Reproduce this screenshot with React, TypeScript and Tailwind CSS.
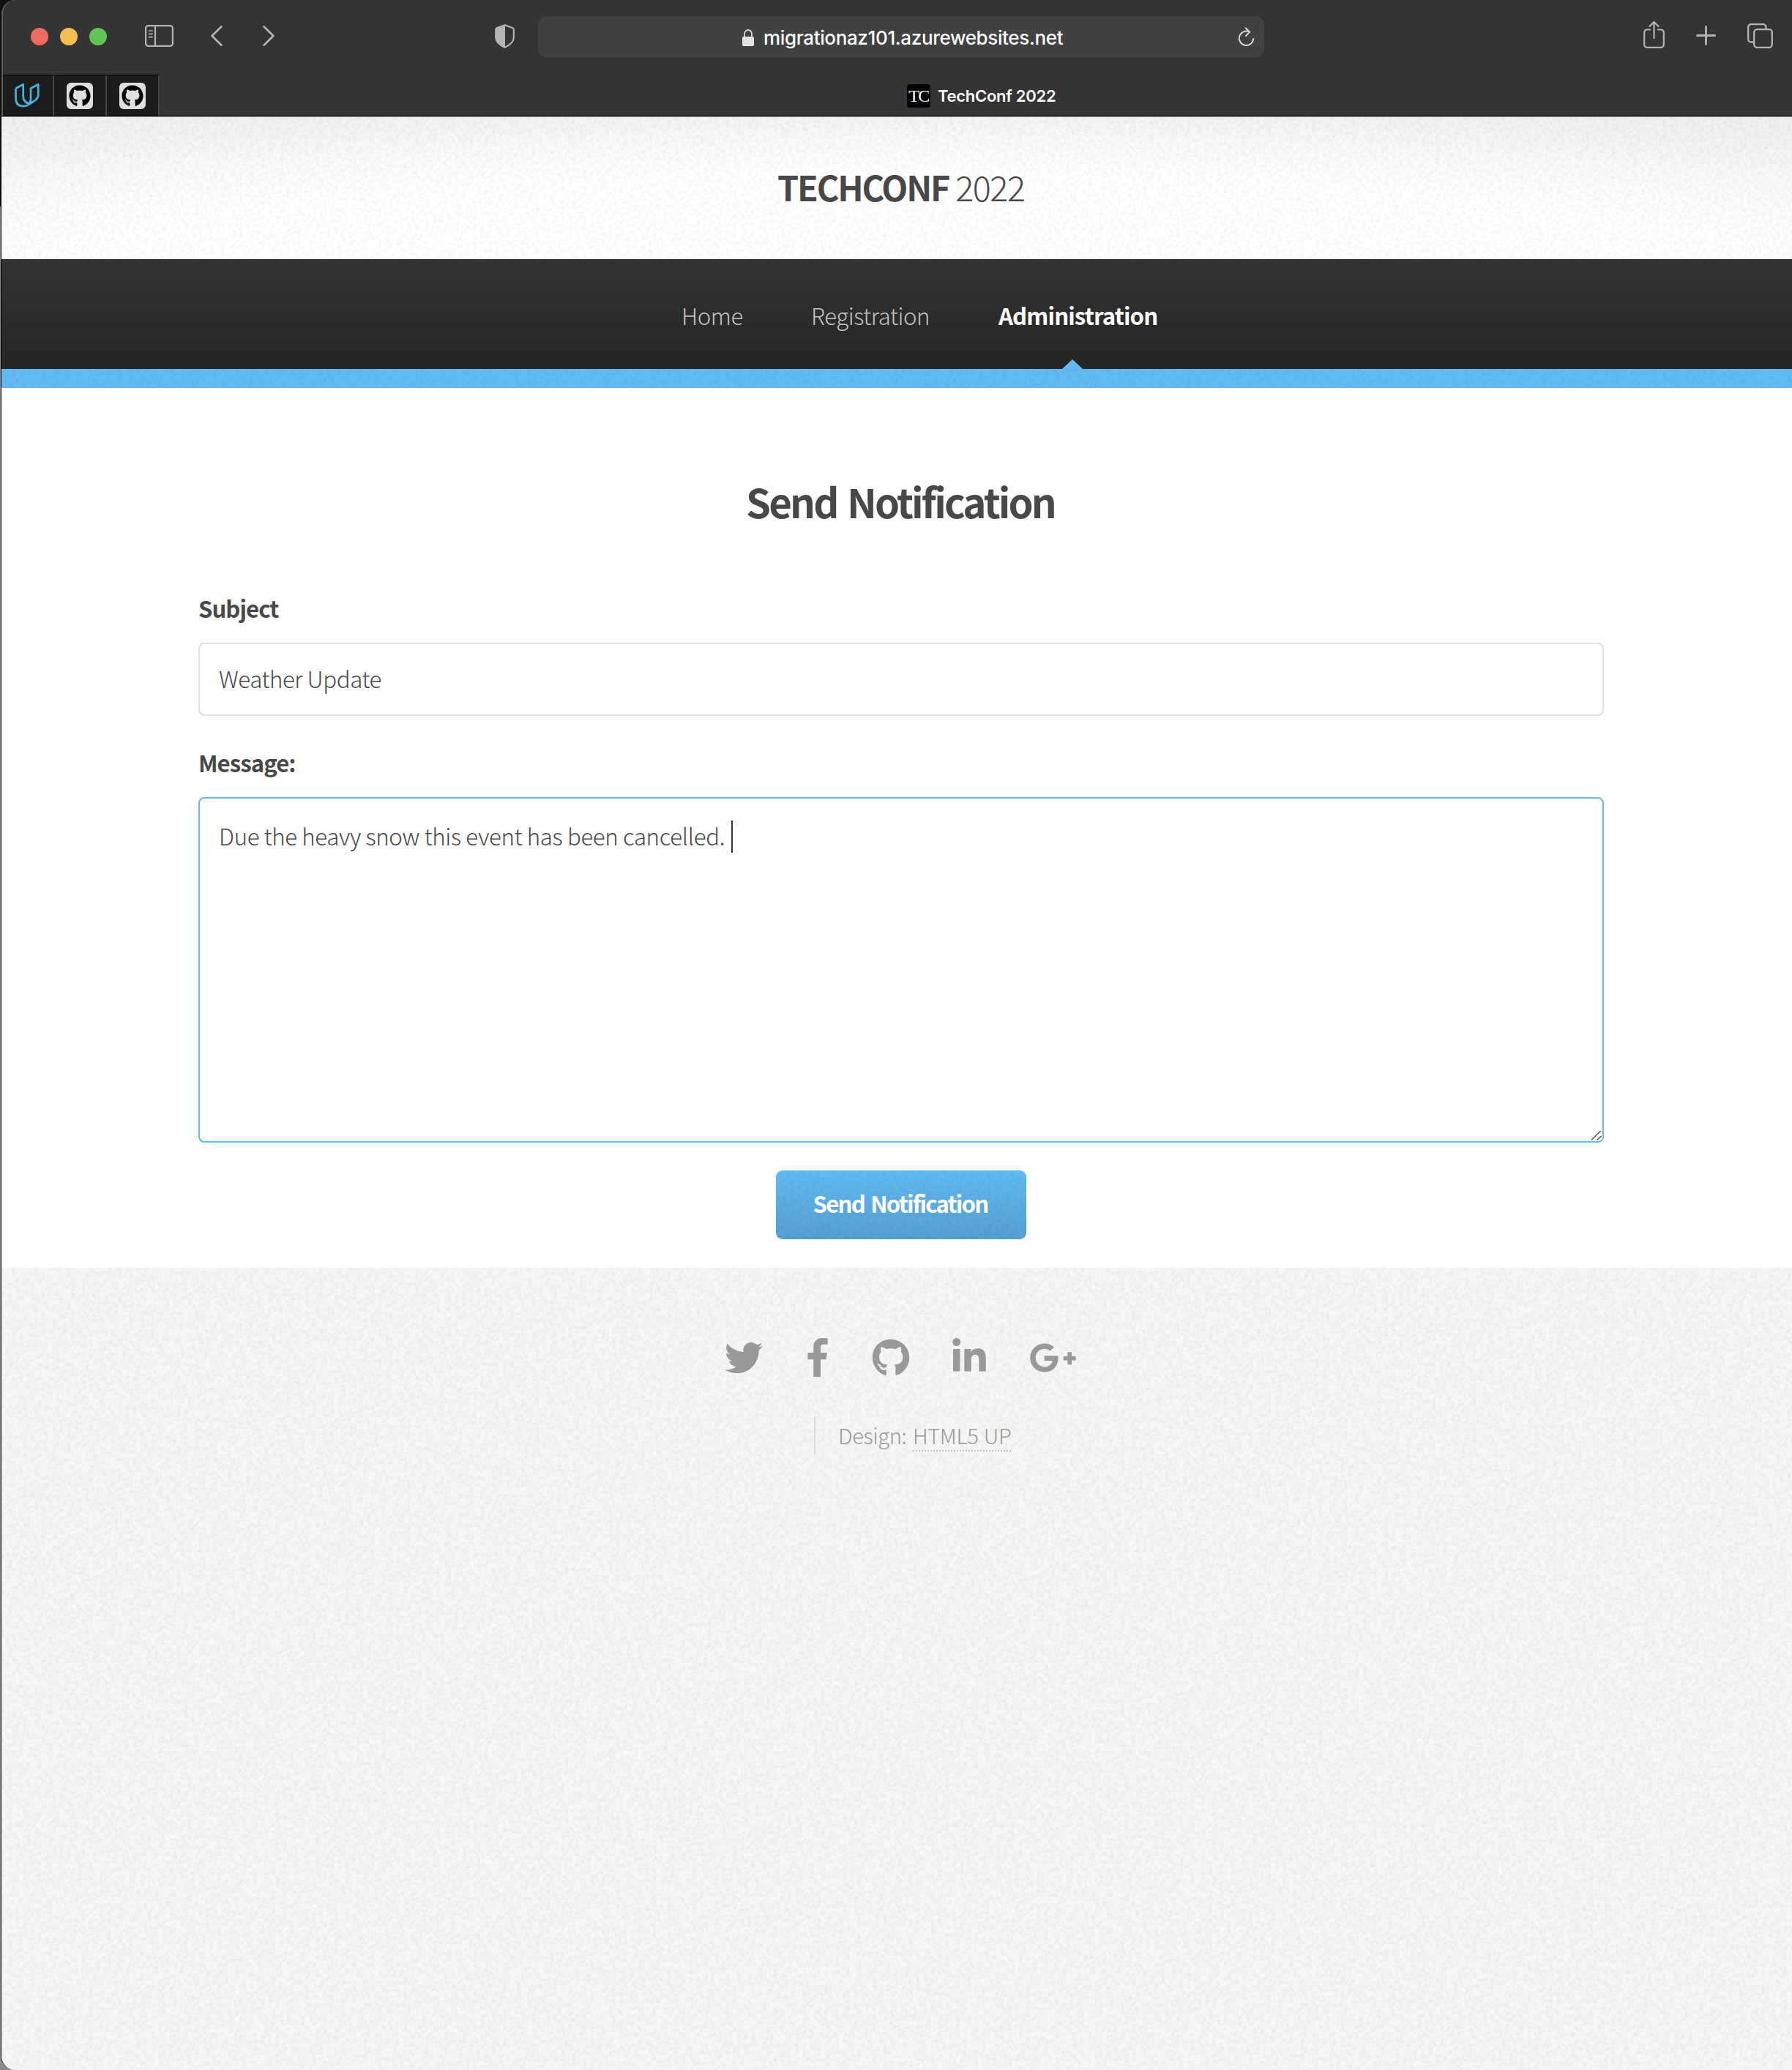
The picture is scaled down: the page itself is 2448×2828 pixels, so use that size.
import React from "react";
import { FaTwitter, FaGithub, FaGooglePlusG, FaLinkedinIn } from "react-icons/fa";

const SANS = "font-['Noto_Sans_CJK_SC','Noto_Sans',sans-serif]";

function Grain({ id, faint }: { id: string; faint?: boolean }) {
  return (
    <svg className="pointer-events-none absolute inset-0 h-full w-full" aria-hidden="true">
      <filter id={id} x="0" y="0" width="100%" height="100%">
        <feTurbulence type="fractalNoise" baseFrequency="0.2" numOctaves="3" seed="4" />
        <feColorMatrix
          type="matrix"
          values={
            faint
              ? "0 0 0 0 0  0 0 0 0 0  0 0 0 0 0  0.09 0 0 0 -0.03"
              : "0 0 0 0 0  0 0 0 0 0  0 0 0 0 0  0.09 0 0 0 -0.034"
          }
        />
      </filter>
      <rect width="100%" height="100%" filter={`url(#${id})`} />
    </svg>
  );
}

function PinnedGithub() {
  return (
    <div className="flex h-full w-[72px] items-center border-r-2 border-[#454545] bg-[#1c1c1c] pl-[17px]">
      <div className="flex size-9 items-center justify-center rounded-[6px] bg-[#dedede]">
        <FaGithub className="size-[30px] text-black" />
      </div>
    </div>
  );
}

function Chrome() {
  return (
    <header className="relative h-[160px] shrink-0 overflow-hidden border-b border-[#9c9898] bg-[#343434] font-['Inter',sans-serif]">
      <div className="pointer-events-none absolute top-0 left-0 z-10 h-[158px] w-10 rounded-tl-[20px] border-l-2 border-[#5c5c5c]" />
      <div className="flex h-[102px] items-start text-[#b4b4b4]">
        <div className="mt-[38px] ml-[40px] flex gap-4">
          <div className="size-6 rounded-full bg-[#ec6a5e]" />
          <div className="size-6 rounded-full bg-[#f5bf4f]" />
          <div className="size-6 rounded-full bg-[#61c554]" />
        </div>
        <svg className="mt-[34px] ml-[52px] h-[30px] w-[39px]" viewBox="0 0 39 30" fill="none" stroke="currentColor" strokeWidth="2.2">
          <rect x="1.1" y="1.1" width="36.8" height="27.8" rx="3.5" />
          <path d="M14 1v28" />
          <path d="M5.5 8h4.5M5.5 12.3h4.5M5.5 16.6h4.5" strokeWidth="1.7" strokeLinecap="round" />
        </svg>
        <svg className="mt-[34px] ml-[51px] h-[30px] w-[16px]" viewBox="0 0 16 30" fill="none" stroke="currentColor" strokeWidth="2.6" strokeLinecap="round" strokeLinejoin="round">
          <path d="M14.5 2.3 1.6 15l12.9 12.7" />
        </svg>
        <svg className="mt-[34px] ml-[55px] h-[30px] w-[16px]" viewBox="0 0 16 30" fill="none" stroke="currentColor" strokeWidth="2.6" strokeLinecap="round" strokeLinejoin="round">
          <path d="M1.5 2.3 14.4 15 1.5 27.7" />
        </svg>
        <svg className="mt-[33px] ml-[301px] h-[33px] w-[27px]" viewBox="0 0 27 33" fill="none">
          <path d="M13.5 1.2 3 5Q1.2 5.700 1.200 7.500V18.500Q1.200 26 13.500 31.800Q25.800 26 25.800 18.500V7.500Q25.800 5.700 24 5Z" stroke="currentColor" strokeWidth="2.1" />
          <path d="M14 1 3 5Q1.200 5.700 1.200 7.500V18.500Q1.200 26 14 32Z" fill="currentColor" />
        </svg>
        <div className="mt-[22px] ml-[32px] flex h-14 w-[992px] rounded-xl bg-[#414141]">
          <svg className="mt-[18px] ml-[279px] h-[23px] w-[16px]" viewBox="0 0 16 23" fill="none">
            <rect y="10" width="16" height="13" rx="1.800" fill="#e2e2e2" />
            <path d="M3 11V6.500a5 5.500 0 0 1 10 0V11" stroke="#d8d8d8" strokeWidth="1.800" />
          </svg>
          <span className="mt-[11px] ml-[13px] w-[420px] whitespace-nowrap text-[26px] leading-[38px] font-medium tracking-[-0.36px] text-white">
            migrationaz101.azurewebsites.net
          </span>
          <svg className="mt-[15px] ml-[228px] h-[27px] w-[23px]" viewBox="0 0 23 27" fill="none" stroke="#d8d8d8" strokeWidth="1.9" strokeLinecap="round" strokeLinejoin="round">
            <path d="M21.200 16A9.700 9.700 0 1 1 16 6.700M10.800 1.500 16.200 6.700 11 12" />
          </svg>
        </div>
        <svg className="mt-[28px] ml-[518px] h-[38px] w-[29px]" viewBox="0 0 29 38" fill="none" stroke="currentColor" strokeWidth="2.200" strokeLinecap="round" strokeLinejoin="round">
          <path d="M9 12.500H5a3.800 3.800 0 0 0-3.800 3.800V33A3.800 3.800 0 0 0 5 36.800H24a3.800 3.800 0 0 0 3.800-3.800V16.300a3.800 3.800 0 0 0-3.800-3.800H20M14.500 24V2.500M8.500 8 14.500 2 20.500 8" />
        </svg>
        <svg className="mt-[35px] ml-[43px] size-[27px]" viewBox="0 0 27 27" stroke="currentColor" strokeWidth="2.800" strokeLinecap="round">
          <path d="M13.500 1.400v24.200M1.400 13.500h24.200" />
        </svg>
        <svg className="mt-[32px] ml-[43px] h-[34px] w-[35px]" viewBox="0 0 35 34" fill="none" stroke="currentColor" strokeWidth="2.300">
          <rect x="9.200" y="8.200" width="24.600" height="24.600" rx="4" />
          <path d="M25.500 8V5A3.800 3.800 0 0 0 21.700 1.200H5A3.800 3.800 0 0 0 1.200 5V21.700A3.800 3.800 0 0 0 5 25.500H9" />
        </svg>
      </div>
      <div className="flex h-[57px] border-b border-black">
        <div className="flex h-full w-[216px] border-t border-black">
          <div className="flex h-full w-[72px] items-center border-r-2 border-[#454545] bg-[#1c1c1c] pl-[18px]">
            <svg className="h-[33px] w-[34px]" viewBox="0 0 34 33" fill="none" stroke="#4aaede" strokeWidth="2.700" strokeLinejoin="round">
              <path d="M1.500 6.800 11.700 1.300V17.500Q11.700 24 17.500 26.500M1.500 6.800V20Q1.500 31.200 12 31.200Q16 31.200 20 28.500L27.500 23.500Q32.300 20 32.300 15V1.300L22 6.800V22Q22 26 18.500 29" />
              <path d="M14 24.500Q18 29 25.500 24.800" />
            </svg>
          </div>
          <PinnedGithub />
          <PinnedGithub />
        </div>
        <div className="mt-[13px] ml-[1021px] flex size-8 items-center justify-center rounded-[4px] bg-black">
          <span className="font-['Liberation_Serif',serif] text-[24px] leading-8 tracking-[-1.500px] text-white">TC</span>
        </div>
        <span className="mt-[11px] ml-[10px] text-[22px] leading-9 font-semibold tracking-[-0.270px] whitespace-nowrap text-white">TechConf 2022</span>
      </div>
    </header>
  );
}

function Label({ children }: { children: React.ReactNode }) {
  return <label className="block h-[67px] text-[31.200px] leading-[39px] font-bold tracking-[-0.980px]">{children}</label>;
}

export default function App() {
  return (
    <div className="h-[2828px] w-[2448px] overflow-hidden bg-[linear-gradient(to_bottom,#101010_282px,#8c8c8c_282px)]">
      <div className="relative ml-px flex h-full flex-col overflow-hidden rounded-tl-[20px] rounded-bl-[20px] border-l border-black bg-[#f4f4f4]">
        <Chrome />
        <main className={`flex grow flex-col text-[#484848] ${SANS}`}>
          <div className="relative h-[194px] bg-white bg-[radial-gradient(ellipse_75%_100%_at_50%_100%,#ffffff_60%,#ebebeb_135%)]">
            <Grain id="grain-header" />
            <h1 className="relative pt-[63px] pl-[1060px] text-[46.800px] leading-[64px] tracking-[-1.5px] whitespace-nowrap">
              <span className="font-bold tracking-[-2.150px]">TECHCONF</span> <span className="font-light">2022</span>
            </h1>
          </div>
          <nav className="relative h-[150px] bg-gradient-to-b from-[#333333] to-[#252525] text-[31.200px] leading-[40px] tracking-[-0.450px] whitespace-nowrap text-[#c2c2c2]">
            <div className="flex pt-[57px] pl-[929px]">
              <span className="w-[177px] font-light">Home</span>
              <span className="w-[256px] font-light">Registration</span>
              <span className="font-bold tracking-[-0.870px] text-white">Administration</span>
            </div>
            <svg className="absolute bottom-0 left-[1449px] h-[13px] w-[28px]" viewBox="0 0 28 13">
              <path d="M0 13 14 0 28 13Z" fill="#62baf4" />
            </svg>
          </nav>
          <div className="relative h-[26px] bg-[#63bbf6]">
            <Grain id="grain-bar" faint />
          </div>
          <section className="flex h-[1202px] flex-col bg-white pr-[257px] pl-[269px]">
            <h2 className="mt-[120px] pr-[2px] text-center text-[54.600px] leading-[70px] font-bold tracking-[-2.850px] [word-spacing:4px]">Send Notification</h2>
            <div className="mt-[91px]">
              <Label>Subject</Label>
              <div className="h-[100px] rounded-[8px] border-2 border-[#e0e0e0] pt-[27px] pl-[26px] text-[31.200px] leading-[40px] font-light tracking-[-0.400px]">
                Weather Update
              </div>
            </div>
            <div className="mt-[44px]">
              <Label>Message:</Label>
              <div className="relative flex h-[472px] rounded-[8px] border-2 border-[#62baf4] pt-[31px] pl-[26px] text-[31.200px] leading-[40px] font-light tracking-[-0.330px]">
                <span className="w-[700px] whitespace-nowrap">Due the heavy snow this event has been cancelled.</span>
                <span className="-mt-px h-[44px] w-[2px] bg-[#333]" />
                <svg className="absolute right-[1px] bottom-[1px] h-[14px] w-[15px]" viewBox="0 0 15 14" stroke="#5c5c5c" strokeWidth="1.600">
                  <path d="M1 13.500 13.500 1M8.500 13.500 14.500 8" />
                </svg>
              </div>
            </div>
            <button className="relative mt-[38px] h-[94px] w-[342px] self-center overflow-hidden rounded-[9px] bg-gradient-to-b from-[#63bbf7] to-[#54a0d1] text-[31.200px] leading-[40px] font-bold tracking-[-1.800px] text-white [word-spacing:3px]">
              <Grain id="grain-button" faint />
              <span className="relative -top-[2px] -left-px">Send Notification</span>
            </button>
          </section>
          <footer className="relative grow bg-[#f6f6f6] text-[#999999]">
            <Grain id="grain-footer" />
            <div className="relative mt-[96px] flex h-[54px] items-center pl-[988px]">
              <FaTwitter className="size-[52px]" />
              <svg className="mb-px ml-[61px] h-[53px] w-[28px]" viewBox="0 0 264 512" fill="currentColor">
                <path d="M76.700 512V283H0v-91h76.700v-71.700C76.700 42.400 124.300 0 193.800 0c33.300 0 61.900 2.500 70.200 3.600V85h-48.200c-37.800 0-45.100 18-45.100 44.300V192H256l-11.700 91h-73.600v229" />
              </svg>
              <FaGithub className="ml-[60px] size-[52px]" />
              <FaLinkedinIn className="mb-[2px] ml-[55px] size-[52px]" />
              <FaGooglePlusG className="ml-[56px] h-[52px] w-[65px]" />
            </div>
            <div className="relative mt-[53px] ml-[1110px] flex h-[52px] border-l-2 border-[#dddddd] pl-[31px] text-[29.200px] leading-[50px] font-light tracking-[-0.450px] whitespace-nowrap">
              <span className="w-[102px]">Design:</span>
              <span className="h-[48px] border-b-2 border-dotted border-[#c4c4c4] [word-spacing:1.500px]">HTML5 UP</span>
            </div>
          </footer>
        </main>
      </div>
    </div>
  );
}
